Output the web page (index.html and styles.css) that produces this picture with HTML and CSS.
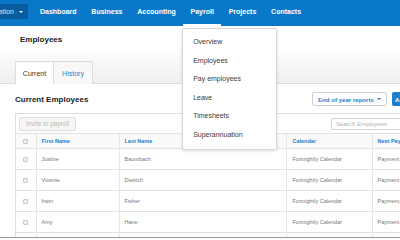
FILE: index.html
```html
<!DOCTYPE html>
<html lang="en">
<head>
<meta charset="utf-8">
<title>Employees</title>
<link rel="stylesheet" href="styles.css">
</head>
<body>
<div class="page">
  <nav class="topnav">
    <button class="org">Organisation <span class="caret"></span></button>
    <ul class="menu">
      <li class="menu-item">Dashboard</li>
      <li class="menu-item">Business</li>
      <li class="menu-item">Accounting</li>
      <li class="menu-item active">Payroll
        <ul class="dropdown">
          <li>Overview</li>
          <li>Employees</li>
          <li>Pay employees</li>
          <li>Leave</li>
          <li>Timesheets</li>
          <li>Superannuation</li>
        </ul>
      </li>
      <li class="menu-item">Projects</li>
      <li class="menu-item">Contacts</li>
    </ul>
  </nav>

  <header class="pagehead">
    <h1 class="title">Employees</h1>
    <div class="tabs">
      <a class="tab active">Current</a>
      <a class="tab">History</a>
    </div>
  </header>

  <main class="content">
    <div class="section-head">
      <h2 class="subtitle">Current Employees</h2>
      <div class="actions">
        <button class="btn-outline">End of year reports <span class="caret blue"></span></button>
        <button class="btn-primary">Add employee</button>
      </div>
    </div>

    <div class="table-box">
      <div class="toolbar">
        <button class="btn-disabled">Invite to payroll</button>
        <input class="search" type="text" placeholder="Search Employees">
      </div>
      <table class="grid">
        <colgroup>
          <col class="c-cb"><col class="c-first"><col class="c-last"><col class="c-cal"><col class="c-next">
        </colgroup>
        <thead>
          <tr><th><span class="cb"></span></th><th>First Name</th><th>Last Name</th><th>Calendar</th><th>Next Payment Date</th></tr>
        </thead>
        <tbody>
          <tr><td><span class="cb"></span></td><td>Justine</td><td>Baumbach</td><td>Fortnightly Calendar</td><td>Payment Date</td></tr>
          <tr><td><span class="cb"></span></td><td>Vicente</td><td>Dietrich</td><td>Fortnightly Calendar</td><td>Payment Date</td></tr>
          <tr><td><span class="cb"></span></td><td>Irwin</td><td>Fisher</td><td>Fortnightly Calendar</td><td>Payment Date</td></tr>
          <tr><td><span class="cb"></span></td><td>Amy</td><td>Hane</td><td>Fortnightly Calendar</td><td>Payment Date</td></tr>
          <tr><td><span class="cb"></span></td><td>Ken</td><td>Jones</td><td>Fortnightly Calendar</td><td>Payment Date</td></tr>
        </tbody>
      </table>
    </div>
  </main>
  <div class="bottom-line"></div>
</div>
</body>
</html>
```

FILE: styles.css
```css
* { box-sizing: border-box; }
html, body { margin: 0; padding: 0; overflow: hidden; background: #fff; }
body { font-family: "Liberation Sans", Arial, sans-serif; color: #333; }

.page { height: 240px; width: 400px; display: flex; flex-direction: column; overflow: hidden; }

/* top nav */
.topnav {
  height: 26px; flex: none;
  background: #0a78c8;
  display: flex; align-items: flex-start;
}
.org {
  flex: none;
  margin: 4px 4.6px 0 -31.7px;
  height: 15px;
  padding: 0 5px 0 6px;
  border: 0;
  background: #075d9f;
  color: #d6e6f3;
  font: 7px "Liberation Sans", Arial, sans-serif;
  display: flex; align-items: center; gap: 5px;
  white-space: nowrap;
}
.caret {
  display: inline-block; width: 0; height: 0;
  border-left: 2px solid transparent; border-right: 2px solid transparent;
  border-top: 2.5px solid #fff;
}
.caret.blue { border-top-color: #1b80cc; }

.menu { list-style: none; margin: 0; padding: 0; display: flex; }
.menu-item {
  position: relative;
  height: 26px;
  padding: 0 7.4px 2px;
  border-bottom: 2px solid transparent;
  display: flex; align-items: center;
  color: #fff; font-weight: bold; font-size: 7px;
  white-space: nowrap;
}
.menu-item.active { border-bottom-color: #fff; }

.dropdown {
  position: absolute; left: -1px; top: 28px;
  width: 95px;
  list-style: none; margin: 0; padding: 4px 0;
  background: #fff;
  border: 1px solid #d8d8d8;
  border-radius: 2px;
  box-shadow: 0 1px 3px rgba(0,0,0,0.15);
  z-index: 5;
}
.dropdown li {
  height: 18.6px; line-height: 18.6px;
  padding-left: 10px;
  font-weight: normal; font-size: 7px; color: #3a3a3a;
}

/* page header */
.pagehead {
  flex: none;
  height: 58px;
  background: linear-gradient(#fff 35%, #efefef);
  border-bottom: 1px solid #dcdcdc;
  display: flex; flex-direction: column;
}
.title { margin: 9px 0 0 20px; font-size: 8px; line-height: 10px; font-weight: bold; color: #222; }
.tabs { display: flex; margin: 16px 0 -1px 15px; }
.tab {
  width: 39px; height: 23px;
  display: flex; align-items: center; justify-content: center;
  font-size: 7px; color: #1a86d2;
  border: 1px solid #dcdcdc; border-bottom: 0;
  background: #f8f8f8;
}
.tab + .tab { border-left: 0; }
.tab.active { background: #fff; color: #333; height: 23px; }

/* content */
.content { flex: 1; min-height: 0; overflow: hidden; padding-left: 15px; width: 442px; }
.section-head { display: flex; align-items: center; justify-content: space-between; margin-top: 8px; height: 14px; }
.subtitle { margin: 0; font-size: 8px; font-weight: bold; color: #222; }
.actions { display: flex; gap: 5px; }
.btn-outline {
  width: 75px; height: 14px; padding: 0 5px;
  border: 1px solid #cfcfcf; border-radius: 2px; background: #fff;
  color: #1b80cc; font: bold 6.1px "Liberation Sans", Arial, sans-serif;
  display: flex; align-items: center; justify-content: space-between;
}
.btn-primary {
  width: 50px; height: 14px; padding: 0 3px;
  border: 0; border-radius: 2px; background: #1b80cc;
  color: #fff; font: bold 6.1px "Liberation Sans", Arial, sans-serif;
  text-align: left; white-space: nowrap;
}

.table-box { margin-top: 7px; border: 1px solid #dedede; border-bottom: 0; }
.toolbar { height: 19px; display: flex; align-items: center; justify-content: space-between; padding: 0 4px 0 3px; }
.btn-disabled {
  width: 57px; height: 14px; padding: 0;
  border: 1px solid #dedede; border-radius: 2px; background: #f6f6f6;
  color: #b8b8b8; font: 6.4px "Liberation Sans", Arial, sans-serif;
}
.search {
  width: 106px; height: 12px;
  border: 1px solid #d4d4d4; border-radius: 2px;
  padding: 0 4px;
  font: 6.1px "Liberation Sans", Arial, sans-serif;
}
.search::placeholder { color: #b0b0b0; }

.grid { width: 425px; border-collapse: collapse; table-layout: fixed; font-size: 5.5px; }
.c-cb { width: 20px; } .c-first { width: 83px; } .c-last { width: 167px; } .c-cal { width: 86px; } .c-next { width: 69px; }
.grid th, .grid td { text-align: left; padding: 0 0 0 5px; white-space: nowrap; overflow: hidden; border-top: 1px solid #e2e2e2; border-left: 1px solid #e6e6e6; }
.grid th:first-child, .grid td:first-child { border-left: 0; padding: 0; text-align: center; }
.grid th { height: 15px; background: #fafafa; color: #1b7fc8; font-weight: bold; }
.grid td { height: 21px; color: #777; }
.grid th:nth-child(4), .grid td:nth-child(4) { padding-left: 6px; }
.cb { display: inline-block; width: 5px; height: 5px; border: 1px solid #c8c8c8; border-radius: 1px; background: #f0f0f0; vertical-align: middle; }

.bottom-line { flex: none; height: 1px; background: #9a9a9a; margin-bottom: 2px; }
```
